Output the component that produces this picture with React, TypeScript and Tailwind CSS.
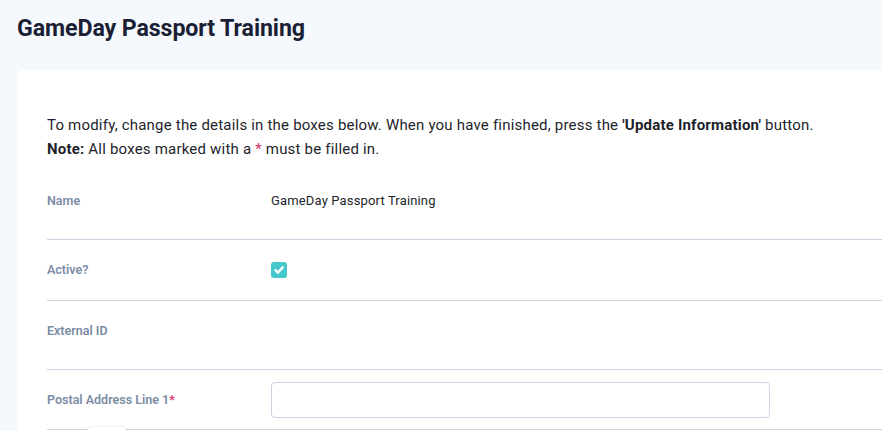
import React from "react";

const font = { fontFamily: "Roboto, 'Noto Sans', sans-serif" };

function Row({
  label,
  required,
  children,
  className,
}: {
  label: string;
  required?: boolean;
  children?: React.ReactNode;
  className: string;
}) {
  return (
    <div className={`flex border-b border-[#c9d5e2] ${className}`}>
      <div className="w-[224px] shrink-0 text-[12.5px] font-semibold text-[#7b8ca4] leading-[18px]">
        {label}
        {required && <span className="text-[#d6336c]">*</span>}
      </div>
      <div className="flex-1 leading-[18px]">{children}</div>
    </div>
  );
}

export default function App() {
  return (
    <div className="w-[882px] h-[431px] overflow-hidden bg-[#f5f8fc] relative" style={font}>
      <h1 className="pl-[17px] pt-[13px] text-[23.2px] leading-[30px] font-bold text-[#1b1f35] tracking-[-0.1px]">
        GameDay Passport Training
      </h1>
      <div className="ml-[17px] mt-[27px] w-[900px] bg-white rounded-l-[6px] pl-[30px] pt-[43px] h-[400px]">
        <p className="text-[15px] leading-[24px] text-[#1d1f2b] tracking-[0.2px]">
          To modify, change the details in the boxes below. When you have finished, press the{" "}
          <b className="font-bold">'Update Information'</b> button.
          <br />
          <b className="font-bold">Note:</b> All boxes marked with a{" "}
          <span className="text-[#d6336c]">*</span> must be filled in.
        </p>
        <Row label="Name" className="pt-[20px] pb-[29px] mt-[11px]">
          <div className="text-[13px] leading-[18px] text-[#1d1f2b] tracking-[0.15px]">GameDay Passport Training</div>
        </Row>
        <Row label="Active?" className="h-[61px] items-center">
          <span className="w-[16px] h-[16px] rounded-[3px] bg-[#45c8cc] flex items-center justify-center">
            <svg width="12" height="12" viewBox="0 0 12 12">
              <path d="M2.4 6.2 L4.9 8.7 L9.7 3.2" fill="none" stroke="white" strokeWidth="2.4" strokeLinecap="round" strokeLinejoin="round" />
            </svg>
          </span>
        </Row>
        <Row label="External ID" className="pt-[21px] pb-[30px] h-[69px]" />
        <Row label="Postal Address Line 1" required className="h-[60px] items-center">
          <div className="w-[499px] h-[36px] border border-[#c9d5e2] rounded-[4px] bg-white" />
        </Row>
      </div>
      <div className="absolute left-[87px] top-[427px] w-[40px] h-[14px] bg-white rounded-[6px] shadow-[0_0_3px_rgba(0,0,0,0.12)]" />
    </div>
  );
}
